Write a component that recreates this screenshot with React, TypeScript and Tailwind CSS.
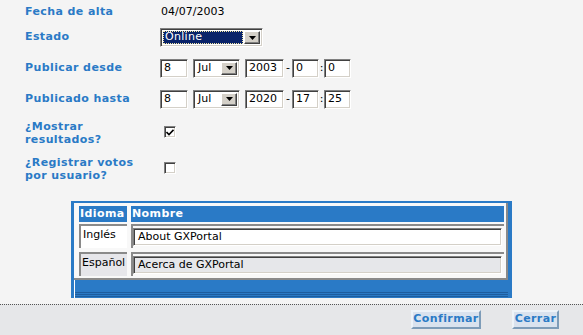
import React from "react";

/* ===============================
   SMALL WIDGETS (win classic look)
================================ */
const inset =
  "border border-t-[#808080] border-l-[#808080] border-b-[#ffffff] border-r-[#ffffff] shadow-[inset_1px_1px_0_#404040,inset_-1px_-1px_0_#d4d0c8]";

const label = "font-bold text-[#2a7ac6] tracking-[0.4px]";

function Arrow() {
  return (
    <div className="w-[16px] h-full bg-[#d4d0c8] border border-t-[#ffffff] border-l-[#ffffff] border-b-[#404040] border-r-[#404040] shadow-[inset_-1px_-1px_0_#808080] flex items-center justify-center">
      <svg width="7" height="4" viewBox="0 0 7 4">
        <polygon points="0,0 7,0 3.5,4" fill="#000" />
      </svg>
    </div>
  );
}

function TextBox({ value, w }: { value: string; w: string }) {
  return (
    <div className={`${inset} ${w} h-[19px] bg-white flex items-center pl-[3px] text-[11px] text-black`}>
      {value}
    </div>
  );
}

function MonthSelect({ value }: { value: string }) {
  return (
    <div className={`${inset} w-[47px] h-[19px] bg-white flex items-center p-[2px]`}>
      <span className="flex-1 pl-[2px] text-[11px] text-black">{value}</span>
      <Arrow />
    </div>
  );
}

function CheckBox({ checked }: { checked?: boolean }) {
  return (
    <div className={`${inset} w-[12px] h-[12px] bg-white flex items-center justify-center`}>
      {checked && (
        <svg width="8" height="7" viewBox="0 0 8 7">
          <path d="M0.5 3 L3 5.5 L7.5 0.8" stroke="#000" strokeWidth="1.6" fill="none" />
        </svg>
      )}
    </div>
  );
}

function DateRow({ text, y, h, m }: { text: string; y: string; h: string; m: string }) {
  return (
    <div className="flex items-center">
      <div className={`w-[135px] ${label}`}>{text}</div>
      <TextBox value="8" w="w-[28px]" />
      <div className="ml-[5px]">
        <MonthSelect value="Jul" />
      </div>
      <div className="ml-[5px]">
        <TextBox value={y} w="w-[39px]" />
      </div>
      <span className="w-[8px] text-center text-black">-</span>
      <TextBox value={h} w="w-[27px]" />
      <span className="w-[5px] text-center text-black">:</span>
      <TextBox value={m} w="w-[27px]" />
    </div>
  );
}

/* ===============================
   PAGE
================================ */
export default function App() {
  return (
    <div className="w-[583px] h-[335px] flex flex-col bg-[#f4f4f4] text-[11px] font-['DejaVu_Sans','Verdana',sans-serif] overflow-hidden">
      {/* FORM */}
      <div className="h-[304px] pl-[25px]">
        <div className="h-[24px] flex items-center">
          <div className={`w-[135px] ${label}`}>Fecha de alta</div>
          <span className="text-black pl-[1px]">04/07/2003</span>
        </div>

        <div className="h-[27px] flex items-center">
          <div className={`w-[135px] ${label}`}>Estado</div>
          <div className={`${inset} w-[103px] h-[19px] bg-white flex items-center p-[2px]`}>
            <div className="flex-1 h-full bg-[#0a246a] outline outline-1 outline-dotted outline-[#f4e9a6] -outline-offset-1 text-white pl-[2px] flex items-center mr-[1px] tracking-[0.3px]">
              Online
            </div>
            <Arrow />
          </div>
        </div>

        <div className="h-[34px] flex items-center">
          <DateRow text="Publicar desde" y="2003" h="0" m="0" />
        </div>
        <div className="h-[28px] flex items-center">
          <DateRow text="Publicado hasta" y="2020" h="17" m="25" />
        </div>

        <div className="flex pt-[7px]">
          <div className={`w-[139px] ${label} leading-[13px]`}>
            ¿Mostrar
            <br />
            resultados?
          </div>
          <div className="mt-[6px]">
            <CheckBox checked />
          </div>
        </div>

        <div className="flex pt-[10px]">
          <div className={`w-[139px] ${label} leading-[13px]`}>
            ¿Registrar votos
            <br />
            por usuario?
          </div>
          <div className="mt-[6px]">
            <CheckBox />
          </div>
        </div>

        {/* IDIOMAS PANEL */}
        <div className="mt-[19px] ml-[46px] w-[441px] h-[97px] bg-[#2a7ac6] pt-[2px] pl-[3px] pr-[4px] flex flex-col">
          <div className="h-[77px] bg-[#f8f8f8] border-b-2 border-r-2 border-[#8a8a8a] pl-[5px] pt-[3px]">
            <div className="flex gap-[4px] h-[16px]">
              <div className="w-[48px] bg-[#2a7ac6] text-white font-bold tracking-[0.4px] flex items-center pl-[1px] overflow-hidden whitespace-nowrap">
                Idioma
              </div>
              <div className="w-[373px] bg-[#2a7ac6] text-white font-bold tracking-[0.4px] flex items-center pl-[1px]">
                Nombre
              </div>
            </div>

            <div className="flex gap-[4px] h-[24px] mt-[2px]">
              <div className="w-[48px] bg-white border-t-2 border-l-2 border-[#8a8a8a] pl-[2px] pt-[2px] text-black leading-[14px]">
                Inglés
              </div>
              <div className="w-[373px] border-t-2 border-l-2 border-[#8a8a8a] pt-[2px] pr-[2px]">
                <div className={`${inset} h-[18px] bg-white flex items-center pl-[4px] text-black`}>
                  About GXPortal
                </div>
              </div>
            </div>

            <div className="flex gap-[4px] h-[24px] mt-[4px]">
              <div className="w-[48px] bg-[#e6e6ea] border-t-2 border-l-2 border-[#8a8a8a] pl-[1px] pt-[2px] text-black leading-[14px]">
                Español
              </div>
              <div className="w-[373px] border-t-2 border-l-2 border-[#8a8a8a] pt-[2px] pr-[2px]">
                <div className={`${inset} h-[18px] bg-[#e6e7ea] flex items-center pl-[4px] text-black`}>
                  Acerca de GXPortal
                </div>
              </div>
            </div>
          </div>

          <div className="flex-1 border-l border-white flex flex-col">
            <div className="h-[12px]" />
            <div className="h-[1px] bg-[#1e5d9e]" />
            <div className="h-[1px]" />
            <div className="h-[1px] bg-[#1e5d9e]" />
            <div className="h-[1px]" />
            <div className="h-[1px] bg-[#1e5d9e]" />
          </div>
        </div>
      </div>

      {/* FOOTER */}
      <div className="flex-1 bg-[#e6e7e9] border-t border-dotted border-[#555] flex justify-end items-start pt-[5px] pr-[24px] gap-[31px]">
        <button className="w-[70px] h-[19px] bg-[#d9e2ee] border-2 border-t-[#eef3f8] border-l-[#eef3f8] border-b-[#7e9cb8] border-r-[#7e9cb8] text-[#2a7ac6] font-bold tracking-[0.4px] text-[11px] flex items-center justify-center">
          Confirmar
        </button>
        <button className="w-[47px] h-[19px] bg-[#d9e2ee] border-2 border-t-[#eef3f8] border-l-[#eef3f8] border-b-[#7e9cb8] border-r-[#7e9cb8] text-[#2a7ac6] font-bold tracking-[0.4px] text-[11px] flex items-center justify-center">
          Cerrar
        </button>
      </div>
    </div>
  );
}
